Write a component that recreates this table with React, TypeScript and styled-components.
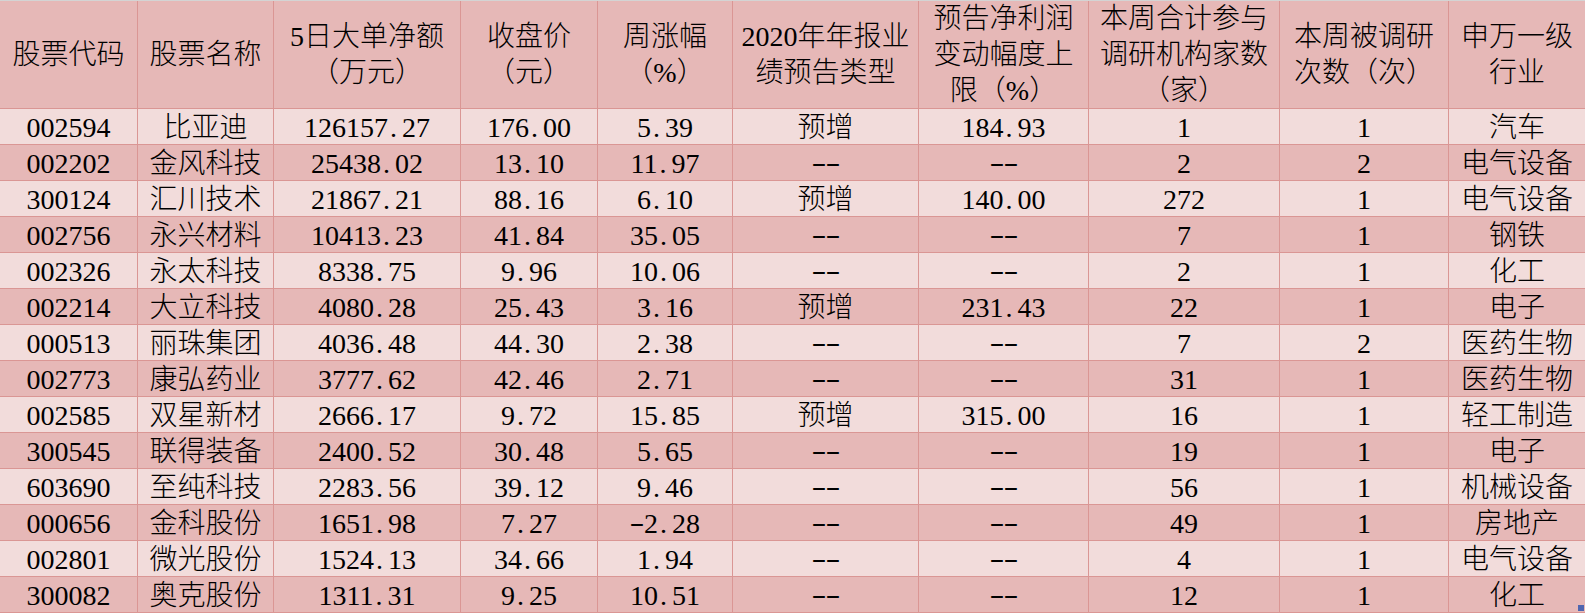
import React from 'react';
import styled, { createGlobalStyle } from 'styled-components';

const GlobalStyle = createGlobalStyle`
  html, body {
    margin: 0;
    padding: 0;
    background: #ffffff;
  }
`;

type Tone = 'head' | 'dark' | 'light';

const headers: string[][] = [
  ['股票代码'],
  ['股票名称'],
  ['5日大单净额', '（万元）'],
  ['收盘价', '（元）'],
  ['周涨幅', '（%）'],
  ['2020年年报业', '绩预告类型'],
  ['预告净利润', '变动幅度上', '限（%）'],
  ['本周合计参与', '调研机构家数', '（家）'],
  ['本周被调研', '次数（次）'],
  ['申万一级', '行业'],
];

const rows: string[][] = [
  ['002594', '比亚迪', '126157.27', '176.00', '5.39', '预增', '184.93', '1', '1', '汽车'],
  ['002202', '金风科技', '25438.02', '13.10', '11.97', '--', '--', '2', '2', '电气设备'],
  ['300124', '汇川技术', '21867.21', '88.16', '6.10', '预增', '140.00', '272', '1', '电气设备'],
  ['002756', '永兴材料', '10413.23', '41.84', '35.05', '--', '--', '7', '1', '钢铁'],
  ['002326', '永太科技', '8338.75', '9.96', '10.06', '--', '--', '2', '1', '化工'],
  ['002214', '大立科技', '4080.28', '25.43', '3.16', '预增', '231.43', '22', '1', '电子'],
  ['000513', '丽珠集团', '4036.48', '44.30', '2.38', '--', '--', '7', '2', '医药生物'],
  ['002773', '康弘药业', '3777.62', '42.46', '2.71', '--', '--', '31', '1', '医药生物'],
  ['002585', '双星新材', '2666.17', '9.72', '15.85', '预增', '315.00', '16', '1', '轻工制造'],
  ['300545', '联得装备', '2400.52', '30.48', '5.65', '--', '--', '19', '1', '电子'],
  ['603690', '至纯科技', '2283.56', '39.12', '9.46', '--', '--', '56', '1', '机械设备'],
  ['000656', '金科股份', '1651.98', '7.27', '-2.28', '--', '--', '49', '1', '房地产'],
  ['002801', '微光股份', '1524.13', '34.66', '1.94', '--', '--', '4', '1', '电气设备'],
  ['300082', '奥克股份', '1311.31', '9.25', '10.51', '--', '--', '12', '1', '化工'],
];

const Sheet = styled.div`
  position: relative;
  width: 1585px;
  display: grid;
  grid-template-columns: 137px 135px 186px 136px 134px 185px 169px 190px 168px 136px;
  grid-template-rows: 107px repeat(14, 35px);
  gap: 1px;
  background: #da9694;
  border-top: 1px solid #d4d4d4;
  padding-bottom: 1px;
  font-family: 'Liberation Serif', 'Noto Sans CJK SC', serif;
  font-size: 28px;
  color: #000000;
`;

const Cell = styled.div<{ $tone: Tone }>`
  display: flex;
  flex-direction: column;
  align-items: center;
  justify-content: center;
  text-align: center;
  white-space: nowrap;
  overflow: hidden;
  line-height: ${(p) => (p.$tone === 'head' ? '36px' : '35px')};
  padding-top: ${(p) => (p.$tone === 'head' ? '0' : '2px')};
  box-sizing: border-box;
  font-weight: 300;
  background: ${(p) => (p.$tone === 'light' ? '#f2dcdb' : '#e6b8b7')};
`;

const Line = styled.span`
  display: block;
`;

const Dot = styled.span`
  display: inline-block;
  width: 0.5em;
  padding-left: 2px;
  box-sizing: border-box;
  text-align: left;
`;

const Dash = styled.span`
  display: inline-block;
  width: 0.5em;
  text-align: center;
  transform: translateY(-2px) scaleX(1.6);
`;

const Handle = styled.div`
  position: absolute;
  right: 1px;
  bottom: 2px;
  width: 6px;
  height: 6px;
  background: #4f66b0;
`;

// SimSun-style half-width punctuation inside numbers
const renderValue = (text: string) =>
  text.split('').map((ch, i) => {
    if (ch === '.') return <Dot key={i}>.</Dot>;
    if (ch === '-') return <Dash key={i}>-</Dash>;
    return ch;
  });

const App = () => {
  return (
    <>
      <GlobalStyle />
      <Sheet>
        {headers.map((lines, i) => (
          <Cell $tone="head" key={`h${i}`}>
            {lines.map((l) => (
              <Line key={l}>{l}</Line>
            ))}
          </Cell>
        ))}
        {rows.map((row, r) =>
          row.map((value, c) => (
            <Cell $tone={r % 2 === 0 ? 'light' : 'dark'} key={`${r}-${c}`}>
              <Line>{renderValue(value)}</Line>
            </Cell>
          ))
        )}
        <Handle />
      </Sheet>
    </>
  );
};

export default App;
